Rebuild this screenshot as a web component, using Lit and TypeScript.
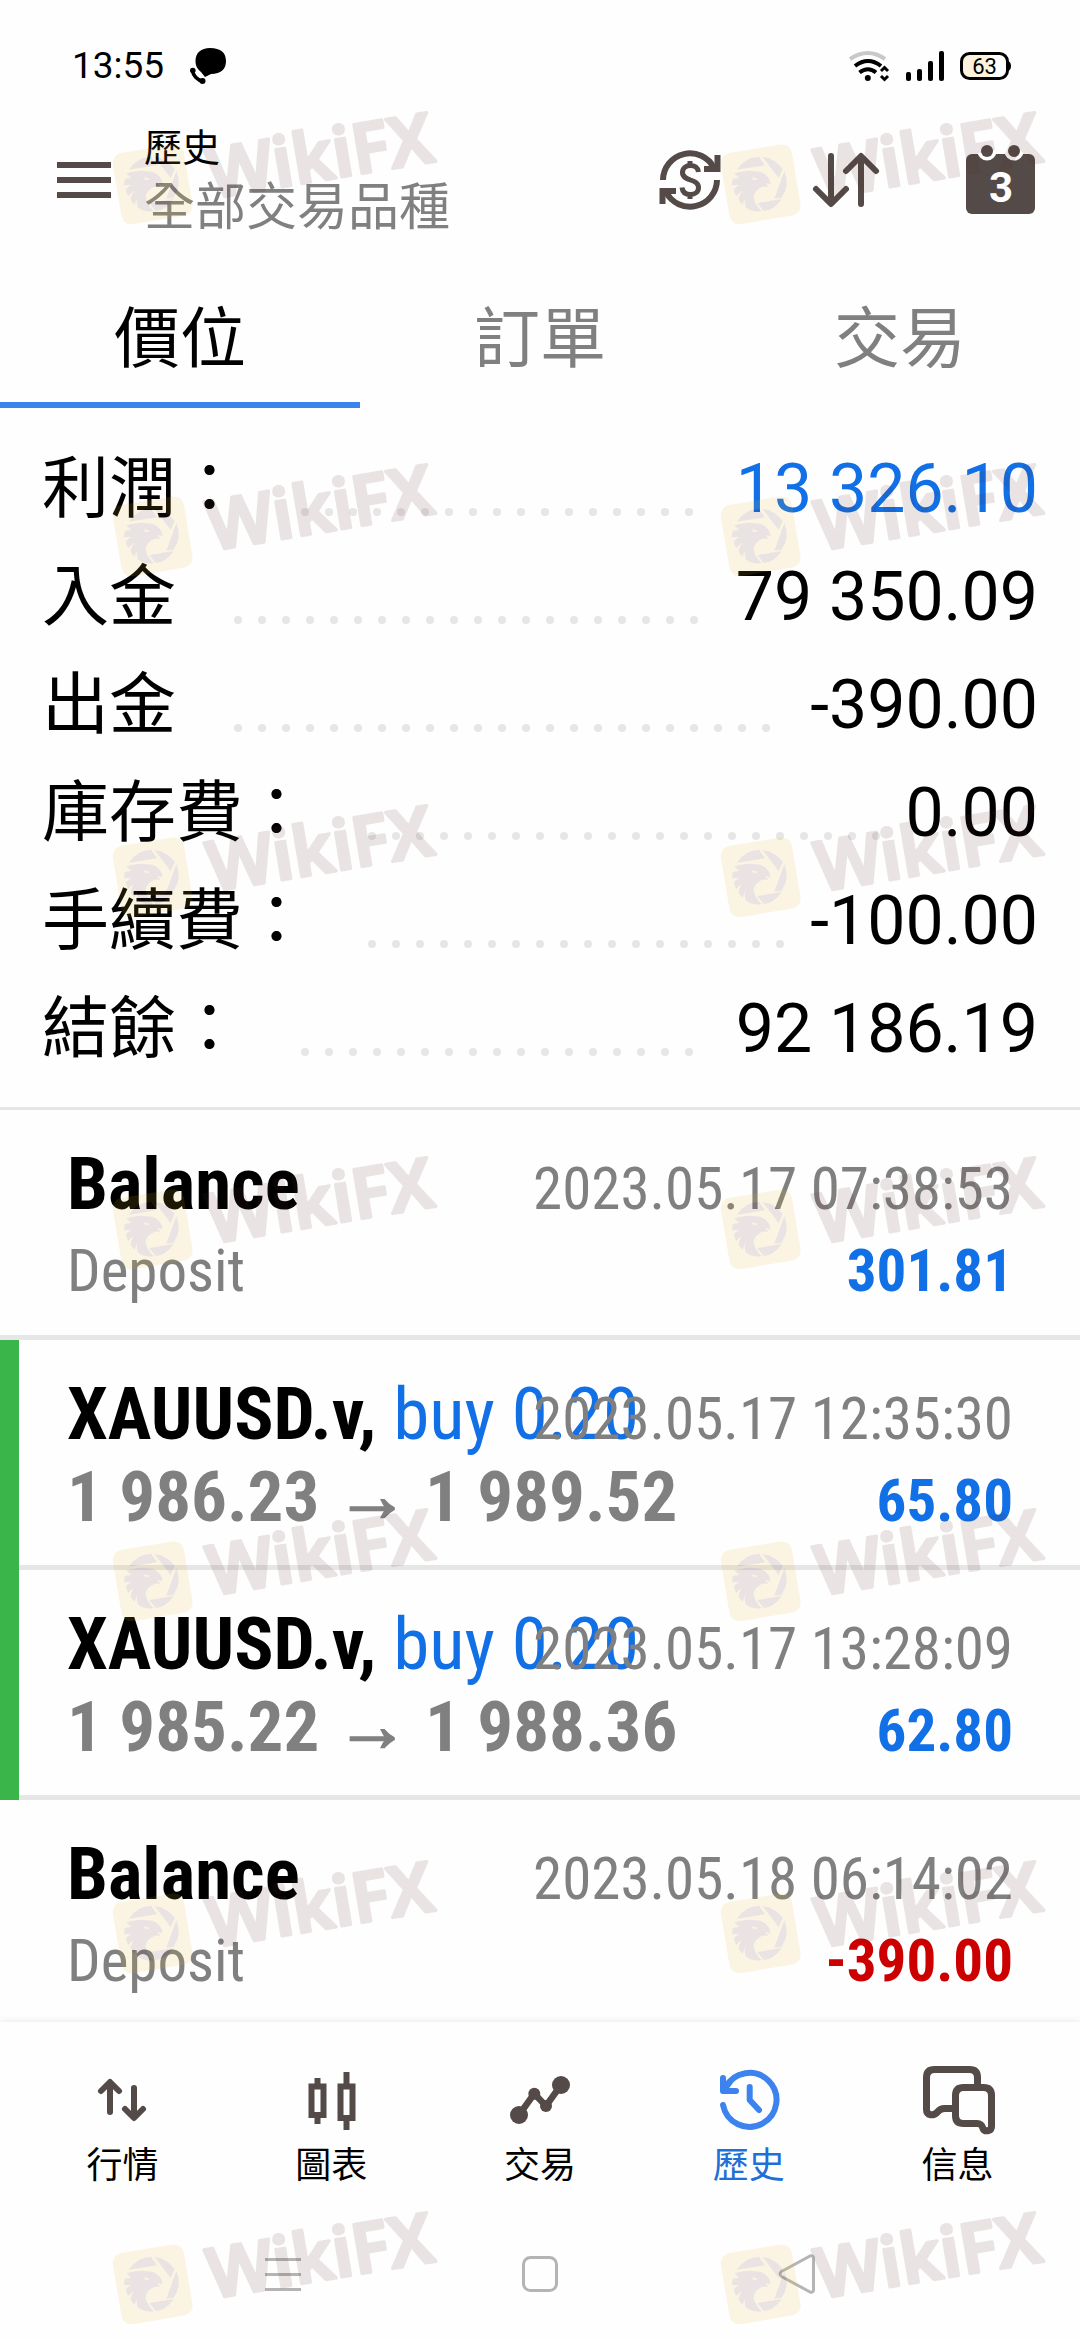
import { LitElement, html, svg, css, nothing } from "lit";
import { customElement, property, state } from "lit/decorators.js";
import { classMap } from "lit/directives/class-map.js";

type Tone = "blue" | "red" | "plain";

interface SummaryLine {
  label: string;
  value: string;
  tone: Tone;
}

interface Deal {
  symbol: string;
  side?: string;
  open?: string;
  close?: string;
  note?: string;
  time: string;
  amount: string;
  tone: Tone;
}

const SUMMARY: SummaryLine[] = [
  { label: "利潤：", value: "13 326.10", tone: "blue" },
  { label: "入金", value: "79 350.09", tone: "plain" },
  { label: "出金", value: "-390.00", tone: "plain" },
  { label: "庫存費：", value: "0.00", tone: "plain" },
  { label: "手續費：", value: "-100.00", tone: "plain" },
  { label: "結餘：", value: "92 186.19", tone: "plain" },
];

const DEALS: Deal[] = [
  { symbol: "Balance", note: "Deposit", time: "2023.05.17 07:38:53", amount: "301.81", tone: "blue" },
  { symbol: "XAUUSD.v", side: "buy 0.20", open: "1 986.23", close: "1 989.52", time: "2023.05.17 12:35:30", amount: "65.80", tone: "blue" },
  { symbol: "XAUUSD.v", side: "buy 0.20", open: "1 985.22", close: "1 988.36", time: "2023.05.17 13:28:09", amount: "62.80", tone: "blue" },
  { symbol: "Balance", note: "Deposit", time: "2023.05.18 06:14:02", amount: "-390.00", tone: "red" },
];

const TABS = ["價位", "訂單", "交易"];

const NAV = [
  {
    label: "行情",
    icon: svg`<g fill="none" stroke="currentColor" stroke-width="6" stroke-linecap="round" stroke-linejoin="round">
      <path d="M24 48V19M15 27l9-9 9 9"/><path d="M48 24V53M39 45l9 9 9-9"/></g>`,
  },
  {
    label: "圖表",
    icon: svg`<g fill="none" stroke="currentColor" stroke-width="6">
      <path d="M16.500 22.500h12v28.500h-12zM45.500 22.500h12V54h-12z"/>
      <path d="M22.500 14v6M22.500 53v7M51.500 8v12M51.500 56v10"/></g>`,
  },
  {
    label: "交易",
    icon: svg`<path d="M15 51L30.300 29.700 42 42 57 21" fill="none" stroke="currentColor" stroke-width="6.500"/>
      <g fill="currentColor"><circle cx="15" cy="51" r="9"/><circle cx="30.300" cy="29.700" r="6"/>
      <circle cx="42" cy="42" r="6"/><circle cx="57" cy="21" r="9"/></g>`,
  },
  {
    label: "歷史",
    icon: svg`<g fill="none" stroke="currentColor" stroke-width="6" stroke-linecap="round" stroke-linejoin="round">
      <path d="M10 41A27 27 0 1 0 12.500 23.500"/><path d="M10 14V27H23"/><path d="M10.500 26.500L17 18"/>
      <path d="M36.700 23V36L46 46"/></g>`,
  },
  {
    label: "信息",
    icon: svg`<g fill="none" stroke="currentColor" stroke-width="7" stroke-linejoin="round">
      <path d="M55.500 21V13.500Q55.500 5.500 47.500 5.500H12.500Q4.500 5.500 4.500 13.500V45.500C4.500 52 11.500 52 15 48.500C18 45.500 19 44.500 23 44.500H33"/>
      <path d="M41.500 23.500H61.500Q69.500 23.500 69.500 31.500V62.500C69.500 67.500 62.500 68 61 64.500C60 61 58.500 59.500 55 59.500H41.500Q33.500 59.500 33.500 51.500V31.500Q33.500 23.500 41.500 23.500Z"/></g>`,
  },
];

@customElement("wiki-stamp")
class WikiStamp extends LitElement {
  static styles = css`
    :host { display: block; }
    .stamp { display: block; width: 342px; height: 126px; opacity: 0.12; overflow: visible; }
    .word {
      font-family: "Noto Sans", "Open Sans", sans-serif;
      font-weight: 600;
      font-size: 208px;
    }
  `;

  render() {
    return html`
      <svg class="stamp" viewBox="0 -90 1026 378" aria-hidden="true">
        <rect x="35" y="37" width="216" height="216" rx="30" fill="#e6b426" transform="rotate(-9.500 143 145)"/>
        <g fill="#582f28">
          <path d="M71 101Q95 64 138 62L156 88Z"/>
          <path d="M148 62Q188 68 209 99L197 126Z"/>
          <path d="M214 106Q232 148 206 185L184 188Z"/>
          <path d="M133 201L206 189Q182 224 152 225Z"/>
          <path d="M64 112Q100 100 128 106Q152 106 165 124Q174 136 172 146Q165 141 156 142Q164 147 166 152Q150 150 141 156Q122 168 122 184Q124 204 146 226Q116 230 98 214Q94 202 96 188L88 206Q80 198 76 188L86 164L70 180Q64 170 62 160L78 146L58 148Q56 138 60 128L78 126Z"/>
        </g>
        <path d="M116 124L134 128Q128 135 119 130Z" fill="#e6b426"/>
        <text class="word" x="320" y="188" fill="#582f28" stroke="#582f28" stroke-width="10"
          stroke-linejoin="round" transform="rotate(-9.500 320 188)">WikiFX</text>
      </svg>
    `;
  }
}

@customElement("deal-row")
class DealRow extends LitElement {
  @property({ attribute: false }) deal!: Deal;

  static styles = css`
    :host {
      display: block;
      font-family: "Roboto Condensed", "Liberation Sans Narrow", Roboto, sans-serif;
    }
    .body {
      box-sizing: border-box;
      height: 230px;
      padding: 33px 67px 0 67px;
      border-bottom: 5px solid #e6e6e6;
    }
    .trade { border-left: 19px solid #39b54a; }
    .trade .body { padding-left: 48px; }
    .line {
      display: grid;
      grid-template-columns: minmax(0, 1fr);
      align-items: baseline;
      height: 82px;
      font-size: 73px;
      line-height: 82px;
      white-space: pre;
    }
    .line::before { content: "\\200b"; }
    .line::before, .start, .end { grid-area: 1 / 1; }
    .end { justify-self: end; }
    .symbol { font-weight: 700; color: #000; }
    .side { color: #1170e6; }
    .small { font-size: 59px; line-height: 64px; color: #808080; }
    .prices { font-size: 71px; font-weight: 700; color: #808080; }
    .arrow { font-size: 73px; font-family: "Liberation Sans", sans-serif; -webkit-text-stroke: 2px #808080; }
    .amount { font-weight: 700; }
    .blue { color: #1170e6; }
    .red { color: #cc0000; }
  `;

  render() {
    const d = this.deal;
    return html`
      <article class=${classMap({ deal: true, trade: !!d.side })}>
        <div class="body">
          <div class="line">
            <span class="start"><span class="symbol">${d.symbol}${d.side ? ", " : ""}</span>${d.side
              ? html`<span class="side">${d.side}</span>`
              : nothing}</span>
            <time class="end small">${d.time}</time>
          </div>
          <div class="line">
            ${d.note
              ? html`<span class="start small">${d.note}</span>`
              : html`<span class="start prices">${d.open} <span class="arrow">→</span> ${d.close}</span>`}
            <span class="end small amount ${d.tone}">${d.amount}</span>
          </div>
        </div>
      </article>
    `;
  }
}

@customElement("app-root")
class AppRoot extends LitElement {
  @state() private tab = 0;

  static styles = css`
    :host {
      display: flex;
      flex-direction: column;
      position: relative;
      height: 100vh;
      overflow: hidden;
      background: #fefefe;
      color: #000;
      font-family: Roboto, "Noto Sans CJK TC", sans-serif;
    }
    button { border: 0; padding: 0; background: none; font: inherit; color: inherit; }
    a { color: inherit; text-decoration: none; }
    svg { display: block; overflow: visible; }

    .status {
      display: flex;
      align-items: center;
      height: 120px;
      padding: 12px 69px 0 72px;
      box-sizing: border-box;
      flex: none;
    }
    .clock { font-size: 37px; line-height: 48px; }
    .chat { margin-left: 26px; }
    .indicators { display: flex; align-items: center; gap: 16px; margin-left: auto; }
    .battery-text { font-size: 22px; }
    .day { font-size: 42px; font-weight: 700; }

    .header {
      display: flex;
      align-items: center;
      height: 120px;
      padding: 0 45px 0 57px;
      color: #544a47;
      flex: none;
    }
    .titles { margin-left: 33px; margin-right: auto; }
    .title { margin: 0; font-size: 38px; font-weight: 400; line-height: 56px; color: #000; }
    .subtitle { margin: 0; font-size: 51px; line-height: 64px; color: #808080; }
    .tools { display: flex; align-items: center; }
    .sort { margin-left: 93px; }
    .calendar { margin-left: 87px; }

    .tabs { display: grid; grid-template-columns: repeat(3, 1fr); height: 168px; flex: none; }
    .tab {
      font-size: 66px;
      line-height: 96px;
      color: #808080;
      padding-top: 38px;
      border-bottom: 6px solid transparent;
    }
    .current { color: #000; border-bottom-color: #3c83ee; }

    .summary {
      margin: 0;
      padding: 25px 42px 26px;
      border-bottom: 3px solid #e6e6e6;
      font-size: 67px;
      flex: none;
    }
    .entry {
      display: flex;
      align-items: center;
      box-sizing: border-box;
      height: 108px;
      padding-top: 4px;
      line-height: 104px;
      white-space: nowrap;
    }
    .value { margin: 0; font-size: 68px; }
    .leader {
      display: flex;
      flex-wrap: wrap;
      flex: 1;
      gap: 16px;
      height: 8px;
      overflow: hidden;
      align-self: flex-end;
      margin: 0 24px 25px 58px;
    }
    .dot { width: 8px; height: 8px; border-radius: 50%; background: #e6e6e6; }
    .blue { color: #1170e6; }

    .deals { margin: 0; padding: 0; list-style: none; flex: 1; min-height: 0; overflow: hidden; }

    .nav {
      display: grid;
      grid-template-columns: repeat(5, 1fr);
      box-sizing: border-box;
      height: 186px;
      padding: 42px 18px 0;
      background: #fefefe;
      box-shadow: 0 0 8px rgba(0, 0, 0, 0.1);
      position: relative;
      flex: none;
    }
    .nav-item { display: flex; flex-direction: column; align-items: center; gap: 6px; }
    .nav-icon { width: 72px; height: 72px; color: #544a47; }
    .nav-label { font-size: 36px; line-height: 48px; }
    .active { color: #1e6fd6; }
    .active .nav-icon { color: #3c83ee; }

    .system {
      display: grid;
      grid-template-columns: repeat(3, 1fr);
      align-items: center;
      justify-items: center;
      height: 132px;
      padding: 0 154px;
      background: #fefefe;
      position: relative;
      flex: none;
    }

    .stamps { position: absolute; inset: 0; overflow: hidden; pointer-events: none; }
    .stamp { position: absolute; }
  `;

  private stamps() {
    const tops = [106, 458, 799, 1151, 1503, 1855, 2206];
    return tops.flatMap((y) =>
      [105, 713].map((x) => html`<wiki-stamp class="stamp" style="left:${x}px;top:${y}px"></wiki-stamp>`)
    );
  }

  render() {
    return html`
      <div class="status">
        <span class="clock">13:55</span>
        <svg class="chat" width="36" height="36" viewBox="0 0 36 36" aria-hidden="true">
          <path d="M20 0C31 0 36 5 36 13S31 26 21 26L15 29L11 24C7 21 5.500 17 5.500 13C5.500 5 11 0 20 0Z"/>
          <path d="M2.500 23C3 27 7 32 13 33.500" fill="none" stroke="#000" stroke-width="3.500"/>
          <circle cx="2.800" cy="22.500" r="2.800"/><circle cx="12.500" cy="33" r="3"/>
        </svg>
        <div class="indicators">
          <svg width="41" height="30" viewBox="0 0 41 30" aria-hidden="true">
            <g fill="none" stroke-width="4">
              <path d="M1 8Q19-4 36 8" stroke="#c8c8c8"/>
              <path d="M6 15Q19 5 32 15M10.500 21.500Q19 15 27 21.500" stroke="#000"/>
              <path d="M32 20l3.500-3.500 3.500 3.500M32 25l3.500 3.500 3.500-3.500" stroke="#000" stroke-width="3"/>
            </g>
            <circle cx="18.800" cy="27" r="3"/>
          </svg>
          <svg width="38" height="30" viewBox="0 0 38 30" aria-hidden="true">
            <rect y="21" width="5" height="9" rx="2"/><rect x="11" y="18" width="5" height="12" rx="2"/>
            <rect x="22" y="10" width="5" height="20" rx="2"/><rect x="33" width="5" height="30" rx="2"/>
          </svg>
          <svg width="51" height="28" viewBox="0 0 51 28" role="img" aria-label="63%">
            <rect x="1.500" y="1.500" width="46" height="25" rx="8" fill="#fff"/>
            <path d="M9.500 1.500H30V26.500H9.500Q1.500 26.500 1.500 18.500V9.500Q1.500 1.500 9.500 1.500Z" fill="#fdf3dc"/>
            <rect x="1.500" y="1.500" width="46" height="25" rx="8" fill="none" stroke="#000" stroke-width="3"/>
            <path d="M48 9Q51 10 51 14T48 19Z"/>
            <text class="battery-text" x="24.500" y="22" text-anchor="middle">63</text>
          </svg>
        </div>
      </div>

      <header class="header">
        <button aria-label="選單">
          <svg width="54" height="36" viewBox="0 0 54 36" fill="currentColor">
            <path d="M0 0h54v6H0zM0 15h54v6H0zM0 30h54v6H0z"/>
          </svg>
        </button>
        <div class="titles">
          <h1 class="title">歷史</h1>
          <p class="subtitle">全部交易品種</p>
        </div>
        <div class="tools">
          <button aria-label="貨幣">
            <svg width="60" height="60" viewBox="0 0 60 60" fill="none" stroke="currentColor" stroke-width="6">
              <path d="M3 30A27 27 0 0 1 54 18M57 30A27 27 0 0 1 6 42"/>
              <path d="M57.500 5V19H44M2.500 54V41H16"/>
              <path d="M50 14l8 6M10 46l-8-6" stroke-width="5"/>
              <path d="M38.500 22C38 17.500 34.500 15.500 30.500 15.500C26 15.500 22.500 18 22.500 22.500C22.500 27 26.500 28.500 30.500 30C35 31.500 38.500 33 38.500 37.500C38.500 42 35 44.500 30.500 44.500C26 44.500 22.500 42.500 22 37.500M30 11v5M30 44v5" stroke-width="5"/>
            </svg>
          </button>
          <button class="sort" aria-label="排序">
            <svg width="66" height="54" viewBox="0 0 66 54" fill="none" stroke="currentColor" stroke-width="6"
              stroke-linecap="round" stroke-linejoin="round">
              <path d="M18 3V50M3 36l15 15 15-15"/><path d="M48 51V4M33 18L48 3l15 15"/>
            </svg>
          </button>
          <button class="calendar" aria-label="日曆">
            <svg width="69" height="69" viewBox="0 1 69 69">
              <rect y="9" width="69" height="60" rx="6" fill="currentColor"/>
              <circle cx="21" cy="6" r="9.500" fill="#fefefe"/><circle cx="48" cy="6" r="9.500" fill="#fefefe"/>
              <circle cx="21" cy="6" r="6" fill="currentColor"/><circle cx="48" cy="6" r="6" fill="currentColor"/>
              <text class="day" x="35" y="57" text-anchor="middle" fill="#fff">3</text>
            </svg>
          </button>
        </div>
      </header>

      <div class="tabs" role="tablist">
        ${TABS.map(
          (label, i) => html`<button
            role="tab"
            aria-selected=${i === this.tab}
            class=${classMap({ tab: true, current: i === this.tab })}
            @click=${() => (this.tab = i)}
          >${label}</button>`
        )}
      </div>

      <dl class="summary">
        ${SUMMARY.map(
          (s) => html`<div class="entry">
            <dt>${s.label}</dt>
            <span class="leader" aria-hidden="true">${Array.from({ length: 40 }, () => html`<i class="dot"></i>`)}</span>
            <dd class="value ${s.tone}">${s.value}</dd>
          </div>`
        )}
      </dl>

      <ul class="deals">
        ${DEALS.map((d) => html`<li><deal-row .deal=${d}></deal-row></li>`)}
      </ul>

      <nav class="nav">
        ${NAV.map(
          (n, i) => html`<a href="#${i}" class=${classMap({ "nav-item": true, active: i === 3 })}>
            <svg class="nav-icon" viewBox="0 0 72 72" aria-hidden="true">${n.icon}</svg>
            <span class="nav-label">${n.label}</span>
          </a>`
        )}
      </nav>

      <div class="system">
        <button aria-label="最近">
          <svg width="36" height="33" viewBox="0 0 36 33" fill="#b4b4b4"><path d="M0 0h36v3H0zM0 15h36v3H0zM0 30h36v3H0z"/></svg>
        </button>
        <button aria-label="主畫面">
          <svg width="36" height="36" viewBox="0 0 36 36" fill="none" stroke="#b4b4b4" stroke-width="3">
            <rect x="1.500" y="1.500" width="33" height="33" rx="7"/>
          </svg>
        </button>
        <button aria-label="返回">
          <svg width="36" height="40" viewBox="0 0 36 40" fill="none" stroke="#b4b4b4" stroke-width="3" stroke-linejoin="round">
            <path d="M2.500 17.500L31 2Q34.500 1 34.500 4.500V35.500Q34.500 39 31 38L2.500 22.500Q0 20 2.500 17.500Z"/>
          </svg>
        </button>
      </div>

      <div class="stamps">${this.stamps()}</div>
    `;
  }
}
